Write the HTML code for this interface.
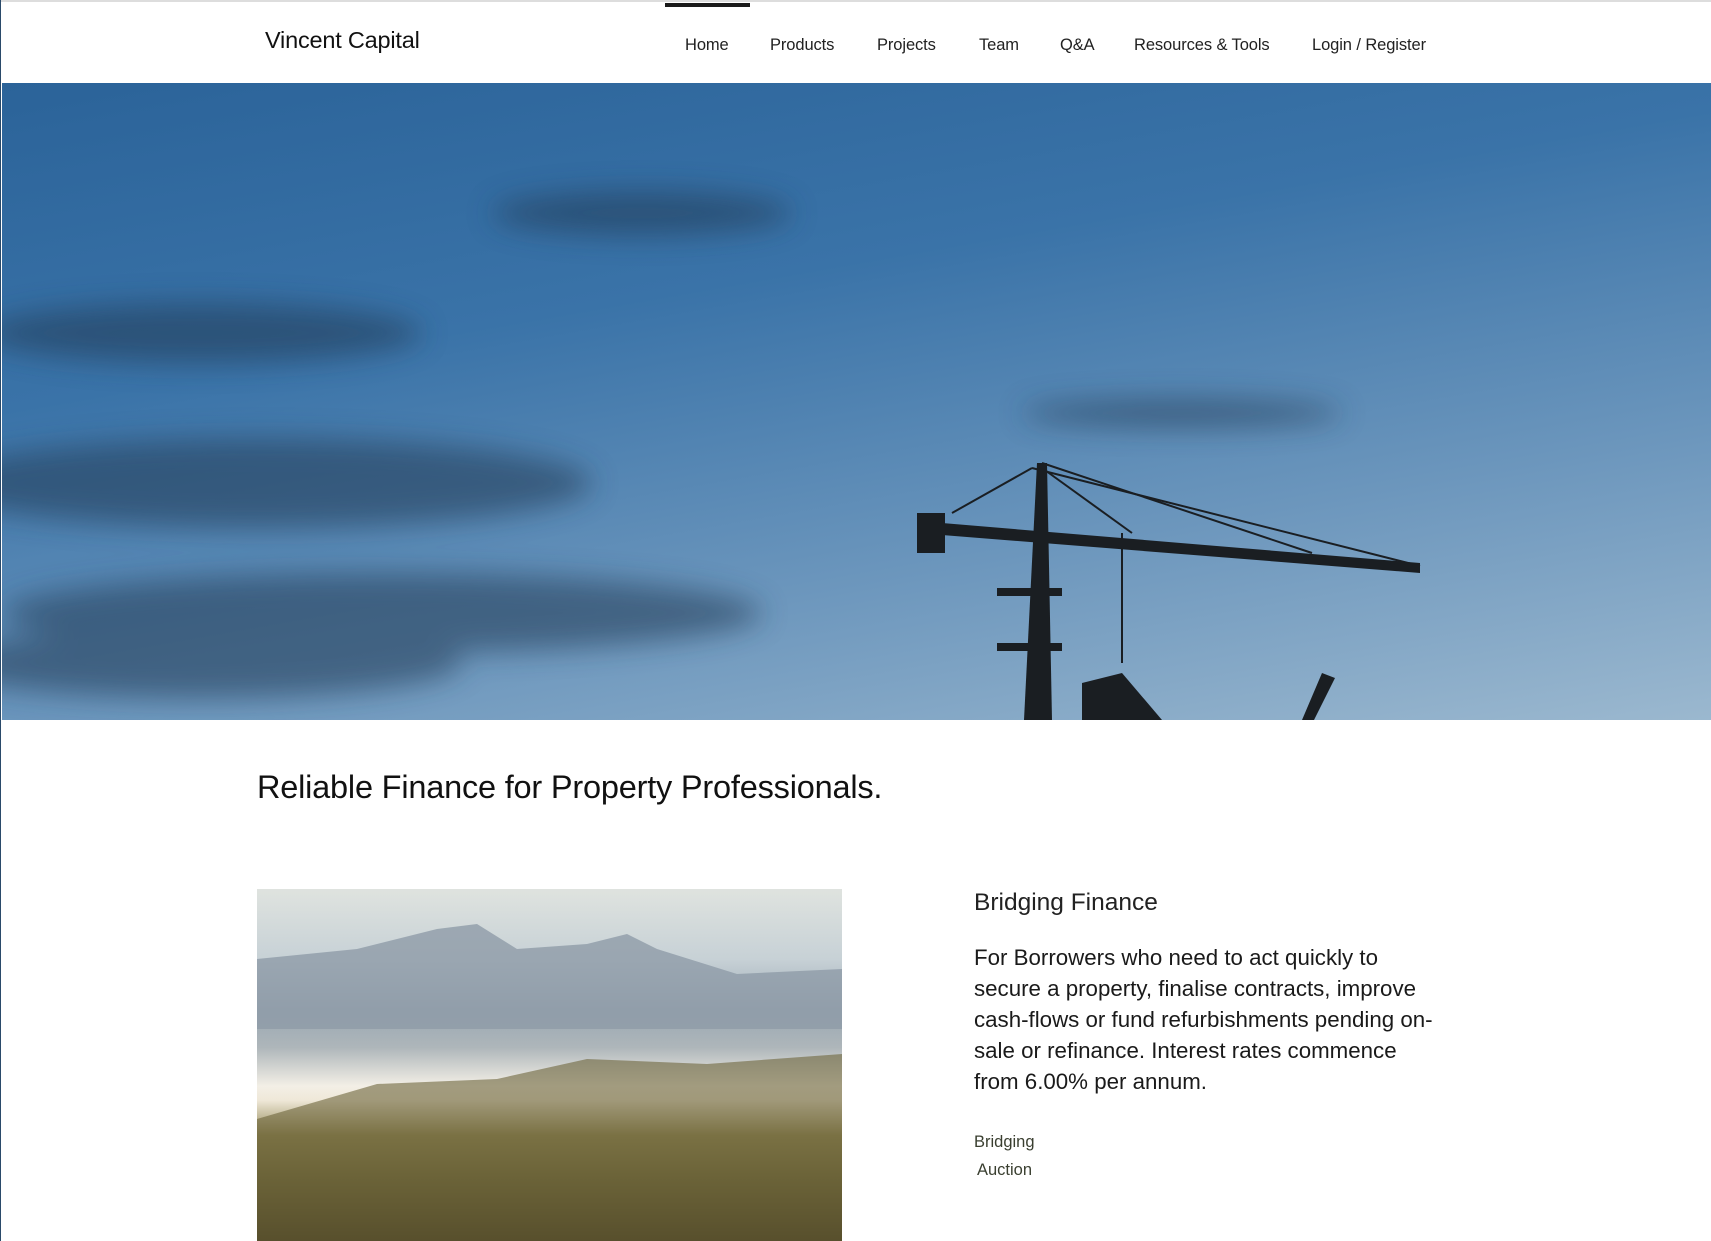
<!DOCTYPE html>
<html><head><meta charset="utf-8"><style>
*{margin:0;padding:0;box-sizing:border-box}
body{width:1711px;height:1241px;overflow:hidden;background:#fff;font-family:"Liberation Sans",sans-serif;color:#111;position:relative;border-left:1px solid #2a4a6a}
.top{position:absolute;left:0;top:0;width:1711px;height:2px;background:#ddd}
.bar{position:absolute;left:664px;top:3px;width:85px;height:4px;background:#1a1a1a}
.logo{position:absolute;left:264px;top:27px;font-size:23.5px;letter-spacing:-0.2px}
.nav a{position:absolute;top:36px;font-size:16.5px;color:#222;text-decoration:none;letter-spacing:-0.1px}
.hero{position:absolute;left:1px;top:83px;width:1710px;height:637px;overflow:hidden;
background:linear-gradient(170deg,#2b6399 0%,#3a73a8 35%,#6d97bd 70%,#9bb8cf 100%)}
h1{position:absolute;left:256px;top:769px;font-size:32.5px;font-weight:normal;letter-spacing:-0.2px}
.img{position:absolute;left:256px;top:889px;width:585px;height:352px;overflow:hidden;
background:linear-gradient(180deg,#dfe3df 0%,#c7d1d6 20%,#9aa8b3 35%,#aeb6ba 45%,#f3efe6 56%,#efe8d8 60%,#8f8552 70%,#6a6236 82%,#3a3219 100%)}
h2{position:absolute;left:973px;top:889px;font-size:24.5px;font-weight:normal;color:#222}
p.d{position:absolute;left:973px;top:942px;width:560px;font-size:22.3px;line-height:31px;color:#1a1a1a;white-space:nowrap}
.t{position:absolute;font-size:16.5px;color:#3a3f30}
</style></head><body>
<div class="top"></div><div class="bar"></div>
<div class="logo">Vincent Capital</div>
<div class="nav">
<a style="left:684px">Home</a><a style="left:769px">Products</a><a style="left:876px">Projects</a><a style="left:978px">Team</a><a style="left:1059px">Q&amp;A</a><a style="left:1133px">Resources &amp; Tools</a><a style="left:1311px">Login / Register</a>
</div>
<div class="hero">
<svg width="1710" height="637" viewBox="0 0 1710 637">
<defs><filter id="b"><feGaussianBlur stdDeviation="14"/></filter></defs>
<g filter="url(#b)" fill="#223a55" opacity="0.55">
<ellipse cx="260" cy="400" rx="330" ry="45"/>
<ellipse cx="380" cy="530" rx="380" ry="40"/>
<ellipse cx="200" cy="250" rx="220" ry="30"/>
<ellipse cx="640" cy="130" rx="150" ry="22"/>
<ellipse cx="1180" cy="330" rx="160" ry="14"/>
<ellipse cx="200" cy="580" rx="260" ry="35"/>
</g>
<g stroke="#1a1e22" fill="none" stroke-width="2">
<line x1="1030" y1="385" x2="1418" y2="483"/>
<line x1="1040" y1="380" x2="1310" y2="470"/>
<line x1="1040" y1="385" x2="1130" y2="450"/>
<line x1="1030" y1="385" x2="950" y2="430"/>
<line x1="1120" y1="450" x2="1120" y2="580"/>
</g>
<g fill="#1a1e22">
<polygon points="1035,380 1045,380 1050,637 1022,637"/>
<rect x="915" y="430" width="28" height="40"/>
<polygon points="940,440 1418,480 1418,490 940,452"/>
<rect x="995" y="505" width="65" height="8"/>
<rect x="995" y="560" width="65" height="8"/>
<polygon points="1080,600 1120,590 1160,637 1080,637"/>
<polygon points="1300,637 1320,590 1333,595 1312,637"/>
</g>
</svg>
</div>
<h1>Reliable Finance for Property Professionals.</h1>
<div class="img"><svg width="585" height="352"><polygon fill="#8f9ba8" opacity=".8" points="0,70 100,60 180,40 220,35 260,60 330,55 370,45 400,60 480,85 585,80 585,140 0,140"/><polygon fill="#6d643a" opacity=".6" points="0,230 120,195 240,190 330,170 450,175 585,165 585,352 0,352"/></svg></div>
<h2>Bridging Finance</h2>
<p class="d">For Borrowers who need to act quickly to<br>secure a property, finalise contracts, improve<br>cash-flows or fund refurbishments pending on-<br>sale or refinance. Interest rates commence<br>from 6.00% per annum.</p>
<div class="t" style="left:973px;top:1133px">Bridging</div>
<div class="t" style="left:976px;top:1161px">Auction</div>
</body></html>
